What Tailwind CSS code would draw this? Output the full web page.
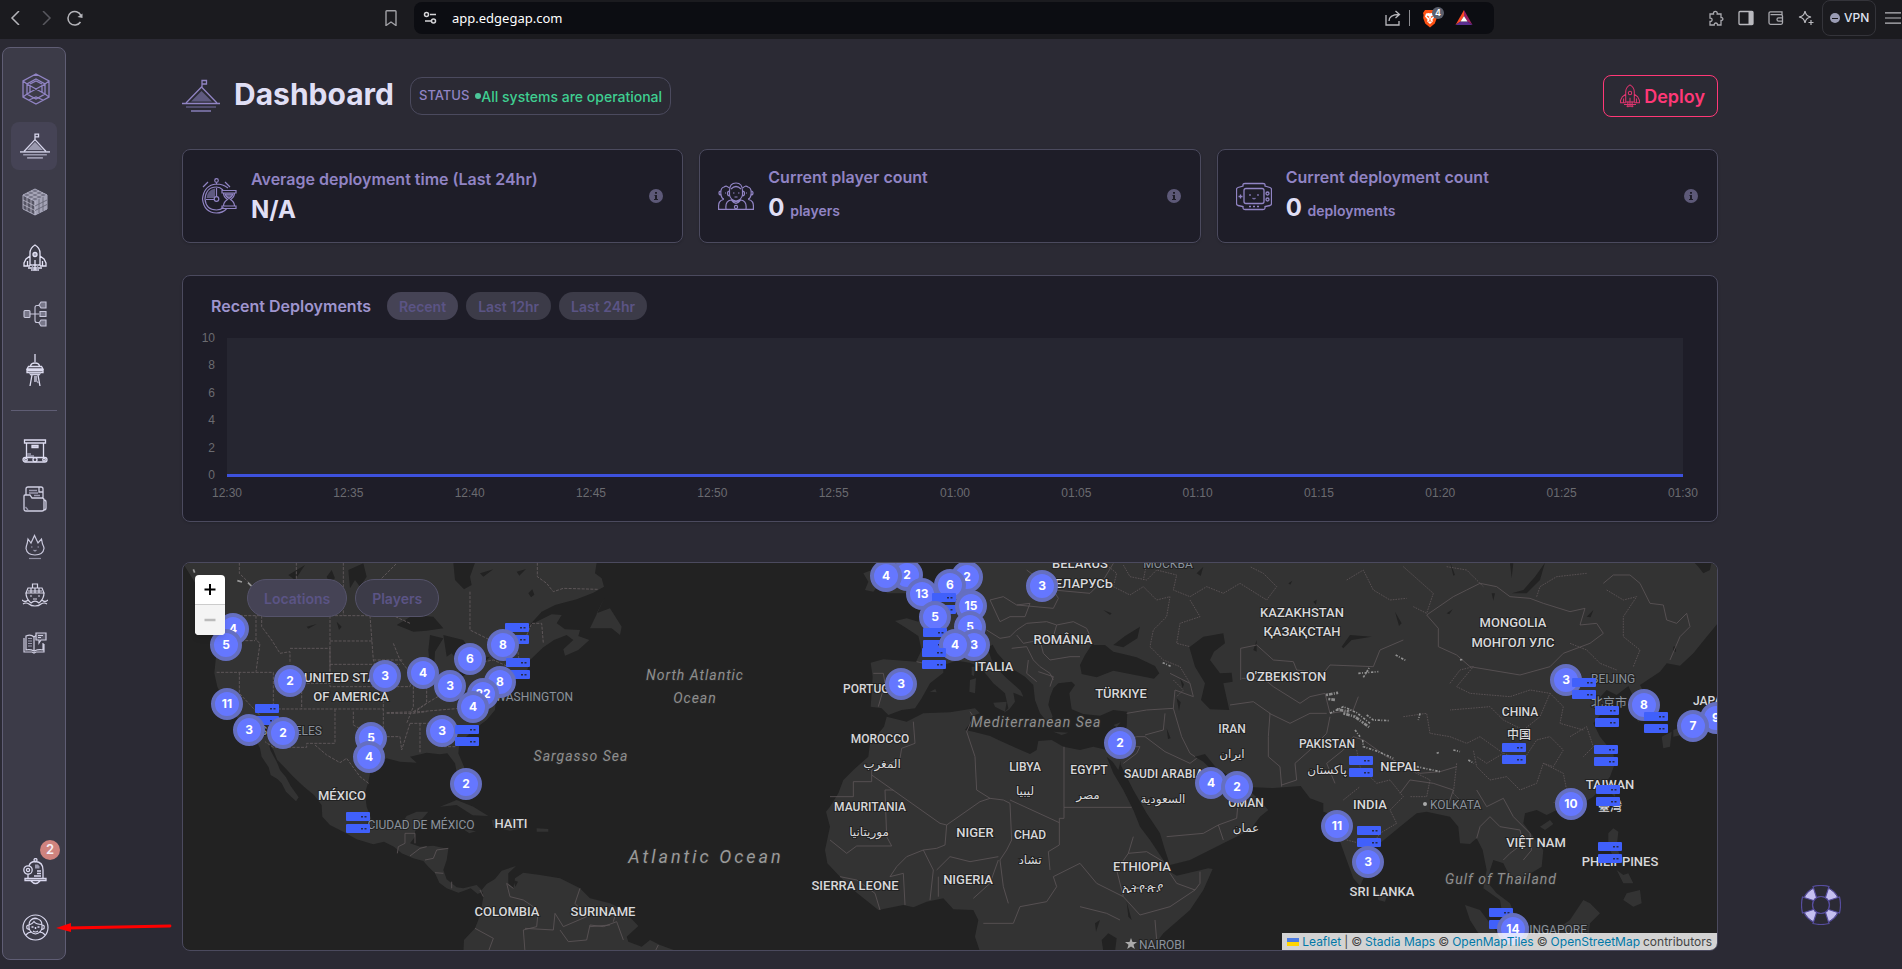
<!DOCTYPE html>
<html lang="en">
<head>
<meta charset="utf-8">
<meta name="viewport" content="width=device-width, initial-scale=1">
<title>Dashboard</title>
<script src="https://cdn.jsdelivr.net/npm/@tailwindcss/browser@4"></script>
</head>
<body class="bg-[#2b2a34] font-['Inter',sans-serif] text-[#e0dff5]">
<div class="flex min-h-screen flex-col">

<!-- Browser toolbar -->
<header class="flex h-[39px] shrink-0 bg-[#1b1b1f] pt-[2px] text-[#a9a9ae]">
  <div class="flex h-8 w-[414px] shrink-0 items-center pl-[9px] pr-[14px]">
    <button aria-label="Back" class="mr-4"><svg class="size-[14px]" viewBox="0 0 14 14" fill="none" stroke="#b5b5ba" stroke-width="1.5"><path d="M10 0 3 7l7 7"/></svg></button>
    <button aria-label="Forward" class="mr-[14px]"><svg class="size-[14px]" viewBox="0 0 14 14" fill="none" stroke="#58585e" stroke-width="1.5"><path d="m4 0 7 7-7 7"/></svg></button>
    <button aria-label="Reload"><svg class="size-4" viewBox="0 0 16 16" fill="none" stroke="#b5b5ba" stroke-width="1.5"><path d="M14 5.500A6.800 6.800 0 1 0 13.500 12"/><path d="m10.500 7 5-3.500V8z" fill="#b5b5ba" stroke="none"/></svg></button>
    <button aria-label="Bookmark" class="ml-auto"><svg class="h-4 w-[18px]" viewBox="0 0 18 16" fill="none" stroke="#a0a0a5" stroke-width="1.400"><path d="M4 1.500q0-.8.8-.8h8.400q.8 0 .8.8v14L9 12l-5 3.500z"/></svg></button>
  </div>
  <div class="flex h-8 flex-1 items-center rounded-lg bg-[#0c0d12] pl-2 pr-4">
    <svg class="size-4 shrink-0" viewBox="0 0 16 16" fill="none" stroke="#d5d5d8" stroke-width="1.500"><circle cx="4.500" cy="4.500" r="2"/><path d="M8 4.500h6"/><circle cx="11.500" cy="11" r="2"/><path d="M3 11h6"/></svg>
    <input aria-label="Address" value="app.edgegap.com" class="ml-[14px] min-w-0 flex-1 bg-transparent font-['Noto_Sans',sans-serif] text-[13px] leading-5 text-white outline-none">
    <button aria-label="Share"><svg class="size-4" viewBox="0 0 16 16" fill="none" stroke="#b9b9be" stroke-width="1.300"><path d="M1 5v10h13v-4M4 11c0-4 3-6.500 10-6.500M10.500 1 14.500 4.500l-4 3.500"/></svg></button>
    <span class="ml-2 h-4 w-px bg-[#8b8b90]"></span>
    <button aria-label="Brave Shields" class="relative ml-3"><svg class="h-[19px] w-4" viewBox="0 0 16 19"><path d="M3 1h10l2 3-.6 2 .4 3-2 5.500L8 18.500l-4.800-4L1.200 9l.4-3L1 4z" fill="#ff5214"/><path d="M4 4.500 7 4l1 .5L9 4l3 .5 1 3-2.500 3 .3 2L8 15l-2.800-2.500.3-2L3 7.500z" fill="#fff"/><path d="m5 7 2 .8-.5 1zm6 0-2 .8.5 1zM8 9v3M6.500 12.500 8 11.800l1.500.7" stroke="#ff5214" stroke-width=".8" fill="none"/></svg>
      <span class="absolute -right-[6px] -top-[2px] flex h-3 w-3 items-center justify-center rounded-full bg-[#5c606d] text-[9px] font-semibold leading-3 text-white">4</span></button>
    <button aria-label="Rewards" class="ml-[17px] mr-[5px]"><svg class="size-[18px]" viewBox="0 0 18 18"><path d="M9 1 0.500 16 5.500 12.500 9 7z" fill="#ff4a24"/><path d="m9 1 8.500 15-5-3.500L9 7z" fill="#9b1f63"/><path d="M.5 16h17l-5-3.500h-7z" fill="#5c2f91"/><path d="m9 7 3.500 5.500h-7z" fill="#fff"/></svg></button>
  </div>
  <div class="flex h-8 w-[408px] shrink-0 items-center justify-end">
    <button aria-label="Extensions" class="mr-[14px]"><svg class="size-4" viewBox="0 0 16 16" fill="none" stroke="#a9a9ae" stroke-width="1.300"><path d="M2 4h3.500c-.8-3.500 4.500-3.500 3.700 0H13v3.500c2.500-.3 2.500 3.300 0 3V15H9.500c.3-2.700-3.600-2.700-3.300 0H2v-3.500c2.800.3 2.800-3.700 0-3.400z"/></svg></button>
    <button aria-label="Sidebar" class="mr-[14px]"><svg class="size-4" viewBox="0 0 16 16"><rect x="1" y="1.500" width="14" height="13" rx="1" fill="none" stroke="#b9b9be" stroke-width="1.300"/><path d="M10.500 1.500H15v13h-4.500z" fill="#b9b9be"/></svg></button>
    <button aria-label="Wallet" class="mr-[14px]"><svg class="size-4" viewBox="0 0 16 16" fill="none" stroke="#a9a9ae" stroke-width="1.300"><path d="M14 4.500V1.800H2.500Q1 1.800 1 3.200v9.600q0 1.500 1.500 1.500H13q1.500 0 1.500-1.500V6q0-1.300-1.500-1.300H2.500M14.500 7.800h-4q-1.500 0-1.500 1.700t1.500 1.700h4"/></svg></button>
    <button aria-label="Leo AI" class="mr-2"><svg class="size-4" viewBox="0 0 16 16" fill="none" stroke="#b9b9be" stroke-width="1.200"><path d="M7 1c.8 4 2 5.200 6 6-4 .8-5.200 2-6 6-.8-4-2-5.200-6-6 4-.8 5.200-2 6-6z"/><path d="M13 10v5M10.500 12.500h5"/></svg></button>
    <button class="flex h-9 w-[54px] items-center gap-1 rounded-lg border border-[#34343a] pl-[7px] text-[12px] font-medium text-[#dfe1f0]"><span class="flex size-[10px] items-center justify-center rounded-full bg-[#9a9cb4]"><span class="h-px w-[6px] bg-[#1b1b1f]"></span></span>VPN</button>
    <button aria-label="Menu" class="ml-2"><svg class="h-3 w-[18px]" viewBox="0 0 18 12" stroke="#b9b9be" stroke-width="1.200"><path d="M1 .8h16M1 6h16M1 11.200h16"/></svg></button>
  </div>
</header>

<div class="flex flex-1">
<!-- Side navigation -->
<nav aria-label="Main" class="mb-[9px] ml-[2px] mt-2 flex w-16 shrink-0 flex-col rounded-lg border border-[#5f5d74] bg-[#3c3b48] px-2 pb-2 pt-4 text-[#d9d8ee]">
  <a href="#" aria-label="Edgegap" class="flex h-[50px] items-center justify-center pl-1"><svg class="h-8 w-7" viewBox="0 0 28 32" fill="none" stroke="#9184c4" stroke-width="1.300"><path d="M14 1 27 8v16l-13 7L1 24V8zM14 6l9 5v10l-9 5-9-5V11zM5 11l18 10M23 11 5 21M1 8l4 3M27 8l-4 3M1 24l4-3M27 24l-4-3M14 1v2M7 27l7-3 7 3M8 11l6-3 6 3M8 13v6M20 13v6"/></svg></a>
  <div class="mt-2 flex flex-col gap-2">
    <a href="#" aria-label="Dashboard" aria-current="page" class="flex h-12 items-center justify-center rounded-lg bg-[#454355] pl-[2px]"><svg class="h-[28px] w-[30px]" viewBox="0 0 38 34" fill="none" stroke="#d9d8ee"><path d="M19 9v-7h4.500v3.500H19M5 24 19 9l14 15" stroke-width="1.600"/><path d="M0 24.500h38" stroke-width="1.700"/><path d="M9 22 19 12l10 10z" fill="#9a99ae" stroke="none"/><path d="M4 28h30M9 32h20" stroke="#9a99ae" stroke-width="2"/></svg></a>
    <a href="#" aria-label="Applications" class="flex h-12 items-center justify-center pl-[2px]"><svg class="size-7" viewBox="0 0 28 28" stroke="#aaa9bd" stroke-width="1"><path d="M14 2 26 7v14l-12 6z" fill="#8f8ea2"/><path d="M14 13 2 7v14l12 6z" fill="#555463"/><path d="m14 1 12 6-12 6L2 7z" fill="#777688"/><path d="M14 13 26 7v14l-12 6z" fill="#a3a2b5" stroke="none"/><path d="M6 9v14m4-12v14m4-12v14M2 12l12 6M2 16.500l12 6M6 5l12 6M10 3l12 6M22 5l-12 6M18 3 6 9" fill="none" stroke="#c5c4d6" stroke-width=".7"/><path d="M18 11v14M22 9v14M14 18l12-6M14 22.500l12-6" fill="none" stroke="#605f70" stroke-width=".8"/></svg></a>
    <a href="#" aria-label="Deployments" class="flex h-12 items-center justify-center pl-[2px]"><svg class="h-7 w-6" viewBox="0 0 24 28" fill="none" stroke="#e3e2f5" stroke-width="1.300"><path d="M7 21V9q0-5 5-8 5 3 5 8v12zM7 12l-4 3-2 4v3h6M17 12l4 3 2 4v3h-6M4.500 17v5M19.500 17v5M12 16v10M5 24h14M8 26h8"/><circle cx="12" cy="10.500" r="2" fill="#9a99ae"/><path d="M9.500 20v7M14.500 20v7" stroke="#a3a2b5"/></svg></a>
    <a href="#" aria-label="Matchmaker" class="flex h-12 items-center justify-center pl-[2px]"><svg class="h-[26px] w-6" viewBox="0 0 24 26" fill="none" stroke="#c9c8dc" stroke-width="1.100"><rect x="1" y="9.500" width="6" height="7" rx="1" fill="#777688"/><path d="M7 13h9M16 4.500h-2q-2 0-2 2v13q0 2 2 2h2"/><path d="M18 1h5v6h-5l-2-3zM17 10.500h6v5h-6zM18 19h5v6h-5l-2-3z" fill="#777688"/></svg></a>
    <a href="#" aria-label="Beacons" class="flex h-12 items-center justify-center pl-[2px]"><svg class="h-8 w-[18px]" viewBox="0 0 18 32" fill="none" stroke="#dddcf0" stroke-width="1.300"><path d="M9 0v8M4.500 12Q5 9 9 9t4.500 3M2.500 12.500h13L17 15H1zM1 16.500h16v2H1zM4 20.500h10M6 21 4 32M12 21l2 11M9 22v6"/><path d="M10.500 22v5l2 2M3 19.500h12" stroke="#a3a2b5"/></svg></a>
  </div>
  <hr class="my-4 border-[#5f5d74]">
  <div class="flex flex-col">
    <a href="#" aria-label="Container registry" class="flex h-12 items-center justify-center pl-[2px]"><svg class="h-6 w-[26px]" viewBox="0 0 26 24" fill="none" stroke="#dddcf0" stroke-width="1.300"><path d="M2.500 1h21v3h-21zM4.500 4v14M21.500 4v14"/><path d="M10 6.500h6v2h-6z" fill="#aaa9bd"/><path d="M5 14h4v2h3v2H5z" fill="#858497" stroke="none"/><rect x="1" y="18.500" width="24" height="4.500" rx="2.250"/><circle cx="4" cy="20.700" r="1.300"/><circle cx="13" cy="20.700" r="2"/><circle cx="22" cy="20.700" r="1.300"/></svg></a>
    <a href="#" aria-label="Files" class="flex h-12 items-center justify-center pl-[2px]"><svg class="h-[26px] w-6" viewBox="0 0 24 26" fill="none" stroke="#d0cfe2" stroke-width="1.300"><path d="M3 9V3q0-2 2-2h13q2 0 2 2v9M1 10q0-1 1-1h5l2 3h10q2 0 2 2v9q0 2-2 2H3q-2 0-2-2zM21 14q2 0 2 2v6q0 2-2 2M16 1v5h4"/><path d="M6 4.500h8M6 7h9M11 9.500h6M2.500 21l2.500 3" stroke="#9a99ae"/></svg></a>
    <a href="#" aria-label="Fleet" class="flex h-12 items-center justify-center pl-[2px]"><svg class="h-[26px] w-5" viewBox="0 0 20 26" fill="none" stroke="#c9c8dc" stroke-width="1.200"><path d="M3 5l3 4 3.500-7.500L13 9l3.500-4 1 5q1.500 3 1.500 4.500-1 6.500-9 6.500T1 14.500q0-2 1.200-5z"/><path d="M6 13h1.500M12.500 13H14M8.500 16l1.500 1 1.500-1" stroke="#9a99ae"/><path d="M4 24.500h12" stroke="#8f8ea2"/></svg></a>
    <a href="#" aria-label="Clusters" class="flex h-12 items-center justify-center pl-[2px]"><svg class="h-6 w-[26px]" viewBox="0 0 26 24" fill="none" stroke="#d5d4e6" stroke-width="1.200"><path d="M10.500 1h5v4h-5zM6 5h14l2 5H4zM4 10h18q0 5-4 9M4 10q0 5 4 9M9 5v5m4-5v5m4-5v5M6 8h14M0 17q3 3 6 0l3 3q4-4 8 0l3-3q3 3 6 0M1 21q3-2 6 0 2 2 6 2t6-2q3-2 6 0"/><path d="M8 13h2M16 13h2M11 16h4"/></svg></a>
    <a href="#" aria-label="Documentation" class="flex h-12 items-center justify-center pl-[2px]"><svg class="h-[22px] w-6" viewBox="0 0 24 22" fill="none" stroke="#cfcee1" stroke-width="1.200"><path d="M3 4Q8 2 11 5v14q-4-2-8-1zM11 5l2-1.500M11 19q5-2 9-1v-7M1 6v14h8l2 1 2-1h8V12"/><path d="M5 6.500h4M5 9h4M5 11.500h4M5 14h4" stroke="#9a99ae"/><path d="M13 1h10v7h-5l-2 3V8h-3z" fill="#555463"/><path d="M15 3.500h5M15 5.500h3"/></svg></a>
  </div>
  <div class="mt-auto flex flex-col gap-2">
    <a href="#" aria-label="2 notifications" class="relative flex h-12 items-center justify-center pl-[2px]"><svg class="h-[27px] w-6" viewBox="0 0 24 27" fill="none" stroke="#d9d8ee" stroke-width="1.300"><circle cx="12.500" cy="2" r="1.500"/><path d="M6 8Q7 3.500 12.500 3.500 20 4 20 12v8M5 16v4M2 20.500h21v2H2zM8 23q4.500 5 9 0"/><circle cx="5" cy="12" r="4.200"/><circle cx="5" cy="12" r="1.600"/><path d="M12 6.500h3l1.500 2v2H12z" fill="#9a99ae" stroke="none"/><path d="M14 13h4M14 15.500h4M11 18h7"/></svg><span class="absolute -right-[3px] -top-[7px] flex size-5 items-center justify-center rounded-full bg-[#cf837e] text-[13px] font-semibold text-[#f4eef5]">2</span></a>
    <a href="#" aria-label="Account" class="flex h-12 items-center justify-center pl-[2px]"><svg class="size-[27px]" viewBox="0 0 27 27" fill="none" stroke="#d9d8ee" stroke-width="1.200"><circle cx="13.500" cy="13.500" r="12.500"/><path d="M7 11q0-6 6.500-6.500Q20 5 20 11v3q-1 5-6.500 6Q8 19 7 14zM7 11q3-.5 5-3.500 2 3 8 3M9 6q3-3 7-1M7 11q-3 0-2 3.500l2 1M20 11q3 0 2 3.500l-2 1M4 21q2-3 6-3M23 21q-2-3-6-3M11 17q2.500 2 5 0"/><path d="M9.500 13h2M15.500 13h2M13.500 13v2" stroke-width="1.500"/></svg></a>
  </div>
</nav>

<main class="min-w-0 flex-1 pb-4 pl-[116px] pr-[184px] pt-9">
  <div class="flex h-[42px] items-center">
    <svg class="h-[34px] w-[38px]" viewBox="0 0 38 34" fill="none" stroke="#9184c4"><path d="M20 8V1.500h4.500V5H20M4 24 19.500 8 35 24" stroke-width="1.300"/><path d="M0 24.500h38" stroke-width="1.400"/><path d="M9 22.500 19.500 12 30 22.500z" fill="#5f5a80" stroke="none"/><path d="M4 28h30" stroke="#5f5a80" stroke-width="1.500"/><path d="M9 32h20" stroke="#6f6896" stroke-width="2"/></svg>
    <h1 class="ml-[14px] pb-1 text-[30px] font-bold leading-10 text-[#e0dff5]">Dashboard</h1>
    <a href="#" class="ml-4 flex h-[38px] items-center rounded-xl border border-[#4b4a5e] px-2 text-[14px] font-medium text-[#3fcf91]"><span class="mr-[6px] text-[13px] text-[#9184c4]">STATUS</span><span class="size-[6px] rounded-full bg-[#4cc79a]"></span>All systems are operational</a>
    <button class="ml-auto flex h-[42px] items-center gap-[3px] rounded-lg border border-[#ff3877] pl-[15px] pr-3 text-[18px] font-semibold text-[#ff3877]"><svg class="h-6 w-[22px]" viewBox="0 0 24 28" fill="none" stroke="#e0356f" stroke-width="1.200"><path d="M7 21V9q0-5 5-8 5 3 5 8v12zM7 12l-4 3-2 4v3h6M17 12l4 3 2 4v3h-6M4.500 17v5M19.500 17v5M12 16v10M5 24h14M8 26h8M9.500 20v7M14.500 20v7"/><circle cx="12" cy="10.500" r="2"/></svg>Deploy</button>
  </div>

  <section class="mt-8 grid grid-cols-3 gap-4">
    <div class="flex h-[94px] items-center rounded-lg border border-[#4b4a5e] bg-[#1e1d28] pl-[18px] pr-[19px] shadow">
      <svg class="size-9" viewBox="0 0 36 36" fill="none" stroke="#9184c4" stroke-width="1.200"><circle cx="15.500" cy="2.500" r="1.800"/><path d="M15.500 4.500v2M2 9l5-5M24 4l5 5M27 10Q22 6 15.500 6 3 7 1.500 21 3 34.500 15.500 35q6 0 10-4"/><path d="M22 12Q19 9 15.500 9 5 9 4 21q1 11 11.500 11 4 0 7-2.500"/><path d="M14 10.500V20H5.500Q6 12 14 10.500z" fill="#5f5a80" stroke="none"/><path d="M15.500 10v9M5 21.500h8"/><circle cx="15.500" cy="21" r="2.300"/><path d="M21 12.500h14v2.500H21zM21 28h14v2.500H21zM22.500 15q0 4 4 6.500-4 2.500-4 6.500M33.500 15q0 4-4 6.500 4 2.500 4 6.500"/><path d="M24 16h8q-1 3-4 4.500-3-1.500-4-4.500z" fill="#5f5a80"/></svg>
      <div class="ml-[14px] flex-1"><h2 class="text-[16px] font-semibold leading-6 text-[#9184c4]">Average deployment time (Last 24hr)</h2><p class="pt-[3px] text-[24px] font-bold leading-8">N/A</p></div>
      <button aria-label="About deployment time" class="size-[14px] rounded-full bg-[#5d5978]"><svg viewBox="0 0 14 14"><path d="M6 3h2v1.700H6zM5.500 6H8v4h1v1H5v-1h1V7h-.5z" fill="#1e1d28"/></svg></button>
    </div>
    <div class="flex h-[94px] items-center rounded-lg border border-[#4b4a5e] bg-[#1e1d28] pl-[18px] pr-[19px] shadow">
      <svg class="size-9" viewBox="0 0 36 36" fill="none" stroke="#9184c4" stroke-width="1.200"><path d="M11.500 13q0-8 6.500-8t6.500 8v4q-1 5-6.500 6-5.500-1-6.500-6zM13 11q5-5 10 0M11.500 13q-2 0-2 2.500t2 2M24.500 13q2 0 2 2.500t-2 2M11 10Q9 7 6 9q-4 1-3 8 1 4 3 4M25 10q2-3 5-1 4 1 3 8-1 4-3 4M3 13q-2 0-2 2t2 2M33 13q2 0 2 2t-2 2M8 31q-1-8 5-9 5 4 10 0 6 1 5 9M.7 31q-1-9 5-9.500M35.300 31q1-9-5-9.500M0 31.300h36M14 23q4 5 8 0"/><circle cx="18" cy="29" r="1.600"/><path d="M15 15h1.500M20 15h1.500M7 15h1M28 15h1M16.500 19h3"/></svg>
      <div class="ml-[14px] flex-1"><h2 class="text-[16px] font-semibold leading-6 text-[#9184c4]">Current player count</h2><p class="pt-[3px] text-[24px] font-bold leading-8">0 <span class="text-[14px] font-semibold text-[#9184c4]">players</span></p></div>
      <button aria-label="About player count" class="size-[14px] rounded-full bg-[#5d5978]"><svg viewBox="0 0 14 14"><path d="M6 3h2v1.700H6zM5.500 6H8v4h1v1H5v-1h1V7h-.5z" fill="#1e1d28"/></svg></button>
    </div>
    <div class="flex h-[94px] items-center rounded-lg border border-[#4b4a5e] bg-[#1e1d28] pl-[18px] pr-[19px] shadow">
      <svg class="size-9" viewBox="0 0 36 36" fill="none" stroke="#9184c4" stroke-width="1.300"><path d="M7 8V6.500Q7 5.500 9 5.500h18q2 0 2 1V8l5 1.500q1.500.5 1.500 2v14q0 1.500-1.500 2L29 28.500V30q0 1.500-2 1.500H9q-2 0-2-1.500v-1.500L2 27.500q-1.500-.5-1.500-2v-14q0-1.500 1.500-2z"/><rect x="8" y="10.500" width="20" height="15" rx="2"/><path d="M2.500 18.500h4M4.500 16.500v4M13 28.500h2M17 28.500h2M21 28.500h2"/><circle cx="31.500" cy="15.500" r="1.500"/><circle cx="31.500" cy="21.500" r="1.500"/><path d="M13 17h2M21 17h2M16.500 20q1.500 1.500 3 0" stroke="#756ba3"/></svg>
      <div class="ml-[14px] flex-1"><h2 class="text-[16px] font-semibold leading-6 text-[#9184c4]">Current deployment count</h2><p class="pt-[3px] text-[24px] font-bold leading-8">0 <span class="text-[14px] font-semibold text-[#9184c4]">deployments</span></p></div>
      <button aria-label="About deployment count" class="size-[14px] rounded-full bg-[#5d5978]"><svg viewBox="0 0 14 14"><path d="M6 3h2v1.700H6zM5.500 6H8v4h1v1H5v-1h1V7h-.5z" fill="#1e1d28"/></svg></button>
    </div>
  </section>

  <section class="mt-8 rounded-lg border border-[#4b4a5e] bg-[#1e1d28] pb-5 pt-4 shadow">
    <div class="flex items-center gap-2 pl-7">
      <h2 class="mr-2 text-[16px] font-semibold text-[#9f95cf]">Recent Deployments</h2>
      <button class="h-7 rounded-full bg-[#454355] px-3 text-[14px] font-semibold text-[#5b5485]">Recent</button>
      <button class="h-7 rounded-full bg-[#3c3b48] px-3 text-[14px] font-semibold text-[#5b5485]">Last 12hr</button>
      <button class="h-7 rounded-full bg-[#3c3b48] px-3 text-[14px] font-semibold text-[#5b5485]">Last 24hr</button>
    </div>
    <div class="mt-[18px] flex pr-[34px] font-['Liberation_Sans',sans-serif] text-[12px] leading-4 text-[#6b6b70]">
      <div class="-my-2 flex w-8 flex-col justify-between pb-[2px] text-right"><span>10</span><span>8</span><span>6</span><span>4</span><span>2</span><span>0</span></div>
      <div class="ml-3 h-[139px] flex-1 border-b-3 border-[#3d51dd] bg-[#262631]"></div>
    </div>
    <div class="ml-11 mr-[34px] mt-2 flex justify-between font-['Liberation_Sans',sans-serif] text-[12px] leading-4 text-[#6b6b70]">
      <span class="flex w-0 justify-center">12:30</span><span class="flex w-0 justify-center">12:35</span><span class="flex w-0 justify-center">12:40</span><span class="flex w-0 justify-center">12:45</span><span class="flex w-0 justify-center">12:50</span><span class="flex w-0 justify-center">12:55</span><span class="flex w-0 justify-center">01:00</span><span class="flex w-0 justify-center">01:05</span><span class="flex w-0 justify-center">01:10</span><span class="flex w-0 justify-center">01:15</span><span class="flex w-0 justify-center">01:20</span><span class="flex w-0 justify-center">01:25</span><span class="flex w-0 justify-center">01:30</span>
    </div>
  </section>

  <!-- World map -->
  <section aria-label="Deployment map" class="relative mt-10 h-[389px] overflow-hidden rounded-lg border border-[#4b4a5e] bg-[#222222]">
    <svg class="absolute left-0 top-0 h-[387px] w-[1534px] max-w-none" viewBox="183 563 1534 387">
      <!-- Americas -->
      <g transform="translate(180 560) scale(.33333)" fill="#333">
        <path d="M8 8 40 60 70 110 100 170 105 215 113 260 107 300 103 340 112 380 128 410 150 450 180 482 205 530 232 548 240 565 245 590 266 622 272 645 292 657 305 670 318 695 348 724 356 712 332 678 318 652 300 630 290 605 272 572 266 550 280 570 292 600 312 620 340 650 372 680 402 705 425 735 427 770 450 795 490 815 530 838 580 853 612 845 642 860 665 880 700 895 730 903 745 920 765 940 778 968 800 985 835 998 850 993 872 985 893 1002 908 995 910 1010 905 1040 895 1080 885 1105 852 1140 850 1180 850 1300H1600L1495 1175 1440 1155 1410 1140 1385 1160 1345 1145 1340 1130 1375 1098 1330 1050 1290 1030 1230 1015 1200 985 1140 955 1080 945 1030 938 1005 955 1000 985 985 970 985 940 1008 918 965 932 945 957 920 972 905 990 890 975 850 985 830 982 800 958 790 930 800 900 805 867 760 857 720 860 690 850 705 830 705 815 715 790 745 755 710 755 680 768 665 790 640 800 600 798 575 780 560 740 555 700 565 665 570 640 600 607 620 595 660 605 710 608 690 590 740 578 780 583 802 580 825 610 832 645 850 670 858 655 852 620 835 580 838 550 880 510 920 480 945 450 948 410 975 370 1000 345 1042 330 1050 300 1090 262 1122 240 1160 225 1180 240 1150 268 1155 287 1195 270 1228 240 1195 228 1200 210 1155 208 1130 190 1145 165 1115 163 1070 185 1040 205 1085 155 1125 135 1190 118 1240 98 1272 80 1265 55 1245 40 1250 8Z"/>
        <path d="M1275 110 1250 160 1290 145 1325 200 1320 225 1295 205 1230 205ZM780 740 830 720 880 740 925 768 878 766 830 735ZM935 780 1000 775 1045 802 990 812 940 800ZM1070 805l35 2v8h-35zM848 806l40 8-20 6zM1168 780l8 6M665 1130l30 8"/>
        <g fill="#222"><path d="M820 8H885L870 50 875 75 852 88 825 60ZM650 195 700 165 760 170 790 205 740 212 700 215ZM750 225 790 235 765 275 762 330 750 330 745 270ZM790 225 850 240 870 270 830 300 815 280 800 290ZM810 350 880 318 850 348ZM870 300 930 290 915 305 870 312ZM505 30 550 10 560 50 540 80 525 60 510 85ZM560 60l15 10-15 18-8-15zM1000 960l14 5-8 15zM325 45l50-30-30 45zM440 50l15-20 10 25-18 12zM900 40l40-12-30 22zM1010 35l28-8-20 20zM1045 100l12-12 6 16-10 8zM380 200l30-8-25 14zM470 185l15 15-8 10z"/></g>
        <g fill="none" stroke="#5d5658" stroke-width="3" stroke-dasharray="9 4"><path d="M140 167H640L690 190M178 8V40L250 110 300 165M349 8V60L360 167M490 8V167M605 55 650 10M228 167V240L240 250 228 335M105 242H225M110 337H280M178 337V400L262 490M280 337V447M245 167 245 200 275 240 300 280 330 275V310M330 265H450V370H360M450 167V380H610M450 243H580M450 313H660M280 447H610M365 380V447M465 447V550H380V562H280L255 545M405 555 440 585 480 608 500 595 540 650 566 670M520 455V495L565 520 610 530M610 380V560M620 460H700L740 455M620 530H660L665 570M690 490 665 570M720 490V580M690 490H820M770 490 785 560H830M570 167 580 300 610 380M580 300H670M610 380H690L700 340M640 250 660 300 700 350M700 340V440L680 490M740 340V430L700 460M790 340V400L740 430 700 455M790 400 830 420 860 400M620 458 720 455 840 445M870 95V210L930 240 990 235 1030 250 1055 190 1085 190 1090 250M1010 250 1020 320M885 310 940 300 985 320M880 370 960 365M1072 8V50L1100 70 1120 95 1150 85 1255 88"/></g>
        <g fill="none" stroke="#5d5658" stroke-width="2.500"><path d="M652 880 655 860 675 850V820H705V850M690 888 720 865 740 860M735 900 760 895 770 870 805 865M765 938 790 940M815 965V985M910 1010 900 990M1000 985 980 970 990 1010 1030 1020 1075 1050 1070 1100 1030 1110 1035 1175M885 1105 940 1135 925 1175M1035 1105 1120 1110 1125 1060 1150 1100 1220 1070 1185 1030 1200 985M1140 1110 1165 1145 1220 1140 1230 1095 1270 1100 1310 1085 1330 1140M1300 1085 1310 1050M1230 1100 1290 1095M1425 1175 1435 1155"/></g>
        <g fill="none" stroke="#9a9a9a" stroke-width="5"><path d="M172 62l14 4M204 68l10 10M40 28l4 10"/></g>
      </g>
      <!-- Europe, Africa and Asia -->
      <g transform="translate(990 550) scale(.33333)" fill="#333">
        <path d="M-60 35-90 100-150 150-185 180-215 215-250 205-285 213-250 235-215 258-205 300-222 335-320 328-358 338-352 380-358 470-325 475-305 495-265 480-225 475-205 445-180 400-140 368-140 345-100 332-60 338-30 350 10 400 45 430 55 475 40 490 58 478 75 455 70 428 100 440 92 422 50 385 10 345-8 292 8 284 22 310 60 352 105 380 130 405 135 450 150 490 175 520 188 500 175 465 180 440 190 415 205 400 245 395 255 405 238 430 245 478 280 492 330 497 370 480 412 485 410 530 400 575 385 600 350 600 310 590 270 600 220 590 185 570 145 573 140 600 120 612 80 595 30 572 0 558-50 545-75 540-60 520-60 500-30 490-45 475-120 487-200 490-250 515-310 500-318 530-360 580-365 620-410 660-440 690-455 730-480 770-492 785-480 830-495 900-488 940-450 980-410 1020-335 1080-260 1065-230 1072-190 1055-140 1045-110 1078-50 1080-35 1110-45 1160-30 1205V1250H480L490 1190 520 1150 600 1080 640 1020 668 957 655 955 560 977 540 965 520 930 480 870 450 830 430 780 400 720 370 670 350 620 368 635 385 660 392 632 392 645 430 720 470 790 510 850 525 900 540 945 600 930 700 880 780 840 810 800 835 780 800 742 775 720 740 695 722 722 690 715 665 660 640 635 615 620 645 612 680 655 740 690 790 712 850 714 932 708 960 745 1000 760 1000 785 1045 800 1045 860 1070 930 1090 985 1110 1008 1132 960 1145 900 1200 855 1230 830 1280 790 1310 785 1380 800 1405 830 1410 880 1440 882 1460 865 1478 900 1490 960 1480 1015 1530 1050 1540 1110 1570 1150 1600 1165 1580 1110 1560 1060 1520 1030 1495 1000 1500 960 1510 930 1540 940 1555 970 1590 990 1655 950 1660 900 1630 860 1600 820 1605 790 1640 780 1670 795 1700 780 1760 770 1810 740 1860 680 1875 640 1870 610 1830 560 1810 520 1835 490 1880 478 1850 462 1830 442 1850 420 1880 435 1915 408 1930 440 1920 475 1945 515 1970 500 1968 440 1950 405 2010 365 2030 340 2070 347 2110 310 2150 260 2190 212V35Z"/>
        <path d="M-380 70-340 55-330 100-350 125-375 120-365 95ZM-320 40-260 35-245 130-310 130ZM-60 390-42 385-45 430-62 425ZM-55 350-45 350-48 378-55 375ZM10 458 50 455 45 485 15 470ZM-180 425l16-8 4 10zM190 545l45 3-20 7zM370 525l22-8-12 14zM1160 1025 1190 1040 1185 1055 1165 1050ZM1650 830l30-20 10 12-25 18zM1855 850 1870 835 1885 845 1880 890 1895 930 1870 920 1855 890ZM1880 960 1900 975 1915 970 1930 1000 1900 1000ZM1910 1030 1950 1020 1955 1060 1930 1070 1900 1050ZM1865 700 1880 690 1875 740 1862 730ZM1425 1065 1470 1080 1530 1160 1560 1205H1500L1440 1110ZM1690 1145 1740 1110 1780 1050 1800 1060 1830 1090 1800 1120 1790 1205H1700ZM2015 560 2045 545 2040 590 2020 595ZM2050 540 2100 520 2190 470V530L2120 545 2050 560ZM2140 500l50-30v-30l-50 45z"/>
        <g fill="#222"><path d="M285 315 305 285 345 285 370 305 400 312 440 322 495 348 508 370 492 386 420 372 370 362 320 382 275 372 270 345ZM370 285 405 258 450 230 442 265 400 292ZM598 292 640 260 700 250 705 280 672 305 660 330 690 370 725 368 728 395 700 400 718 480 660 478 633 450 645 400 615 350ZM1565 130 1600 120 1635 80 1665 38 1650 90 1610 130ZM1560 40h10l-5 45zM1505 130h10l-5 22zM335 1170 355 1150 380 1165 375 1205H340ZM2110 35 2165 35 2160 60 2140 70 2125 50ZM410 1055 425 1110 415 1100ZM315 1120 330 1110 318 1145ZM1055 290 1080 255 1145 260 1085 270 1060 295ZM790 300 800 270 800 305ZM340 180l25 10-5 5zM530 535l12 30-8 2zM560 445l12 12-5 25zM1380 35l15 40-5 2zM570 385l12 18-4 12zM1215 185l20 35-8 8zM620 70l20-20-8 28zM895 100l12-8-6 12zM1370 190l18-12-10 15zM1790 200l20-20-8 22zM2050 290l8-2v18l-8-4zM970 155l10-6-2 16z"/></g>
        <g fill="none" stroke="#5d5658" stroke-width="2.500"><path d="M-350 370H-320L-315 400-335 470M-220 335-135 355M-100 160-60 190-45 260-15 275M0 150 40 140 80 165 120 160 105 200 60 200 30 215 0 150M-10 240 30 265 60 260 80 240 110 220 170 215 200 225 190 260 150 270 100 280 80 255M80 165 190 175 205 145 190 120 110 60M200 225 250 215 290 235 305 270M150 270 160 310 180 330 240 320 270 320M65 295 110 290 130 330 150 350 180 370 190 390M115 330 110 370 140 395M145 365 190 380 180 410M190 120 300 130 340 90 370 40M410 490 470 480 550 475 555 420 610 440 600 400 540 370M550 475 575 560 600 610 615 620M465 555 520 540 525 490M400 575 440 560 465 560 525 605 600 640 620 625M410 590 450 590 440 610 400 640M222 590V772H425M222 772V805H208V885L175 905 180 960M60 750 208 818M0 745 40 750 60 760 65 870 50 900 30 930 40 1010 55 1060M-230 515-225 580-265 595-270 625-320 650-355 660-355 695H-410V740H-480M-355 675-150 820-130 825-30 755 0 745-40 720-45 620-70 545-50 500-60 485M-290 720-315 720-310 860-295 888H-400L-430 910-480 870M-130 825-135 885-160 895-200 900-250 920-280 950-300 980M-450 980-400 990-345 1030-330 1080M-300 980-260 970-255 1065M-200 900-170 960-180 1050M-160 960-120 920-60 935 25 920M-155 1040-155 980M-50 1045 0 1000 25 930M-20 1120 70 1120 90 1070 170 1055 200 1010 190 980 270 940 320 1000 400 1040M430 860 415 910 470 905 520 935M415 910 380 960 400 1040 450 1095 540 1070 615 1020 630 1000 630 965M540 970 560 1000 615 1020M495 1110 500 1170M270 1070 350 1090 390 1110M530 860 640 850 685 825 740 805 745 750M685 825 700 870M720 465 790 455 840 490 835 560 835 620 870 650 875 710M752 390V295L800 285 850 330 910 335 920 360 1000 370 1020 345 1150 350 1170 300 1240 270M755 385 820 385 850 410 930 460 960 440 1005 430 1020 490 1090 480 1105 440M838 490 900 520 960 490 1010 490M875 705 920 690 915 640 960 600 1010 550 1020 500M1035 700 1010 640 1060 600 1090 560 1120 570M1120 570 1190 620 1290 670 1350 665 1400 650M1310 195 1345 235 1345 290 1400 315 1440 350 1530 365 1590 375 1680 350 1720 310 1800 280 1840 250 1820 220 1770 225 1785 175 1740 185 1660 160 1620 145 1560 140 1520 110 1470 100 1430 120 1390 140 1310 195M1840 100 1870 75 1920 75 1950 100 1980 160 2020 165 2030 210 2060 220 2090 190 2100 230 2070 260 2040 330M1460 865 1470 830 1500 800 1530 830 1590 840 1600 880 1560 910 1540 930M1460 720 1490 770 1540 745 1570 800 1620 850 1625 900 1600 930M1230 730 1260 690 1330 700 1390 720 1370 780"/></g>
        <g fill="none" stroke="#5f5759" stroke-width="2.500" stroke-dasharray="5 3"><path d="M350 45 380 70 370 110 420 135 460 110 500 150 540 140 530 200 490 240 480 290 520 330 570 350 600 400M400 45 420 80 470 90 500 60 560 75 550 120 600 140 650 110 700 130 750 100 830 150 860 110 820 70 780 50M470 40 460 90M600 150 630 200 570 220 560 280 600 290M1070 90 1120 60 1150 120 1200 150 1250 145M1240 50 1330 130 1310 190 1270 170M1370 50 1430 60 1480 110M1640 140 1650 110 1700 80 1790 70M1380 400 1410 360 1450 350 1400 410 1440 430 1560 440 1620 420 1680 430 1650 500 1600 540 1540 510 1500 470 1380 480M1240 500 1310 490 1320 550 1380 560 1430 580 1470 560 1540 610 1490 640 1460 620M1540 610 1600 630 1640 570 1680 560 1720 600 1690 650 1660 640 1640 700 1590 720 1550 680 1500 690 1460 650 1450 600M1660 640 1720 670 1730 720 1690 760M1740 560 1790 530 1810 590 1780 620M1680 430 1720 470 1710 520 1780 540M1740 280 1790 300 1830 340 1880 360M1850 120 1900 150 1940 140 1900 200 1900 260 1950 300 1930 350M1100 600 1110 650 1160 700 1200 690 1240 740 1200 780 1220 820 1170 850 1150 880M1060 750 1110 710M1070 870 1110 880M1240 650 1320 690 1310 740 1260 740M1400 640 1390 730 1420 760M550 390 580 420 560 440"/></g>
        <g fill="none" stroke="#8c8c8c" stroke-width="8" stroke-dasharray="6 3 11 4 3 4"><path d="M1008 435 1045 428M1015 447 1038 450M1040 478 1080 485M1060 490 1095 500 1138 532"/></g>
        <g fill="none" stroke="#929292" stroke-width="5" stroke-dasharray="7 4 3 5"><path d="M1020 490 1060 470 1100 488 1140 520M1130 495 1150 510 1200 512M1095 540 1110 560M1118 570 1120 590 1165 605 1210 625M1105 370 1165 365M1120 382 1140 350M518 338 545 350M1217 315 1250 333M1280 650 1350 665M1390 600 1410 605M1435 630 1452 640M1340 610 1350 606M1290 490 1285 510M1410 330 1420 328"/></g>
      </g>
      <path d="m1131 938 1.500 4h4.500l-3.500 2.800 1.300 4.200-3.800-2.600-3.800 2.600 1.300-4.200-3.500-2.800h4.500z" fill="#aaa"/>
      <circle cx="1425" cy="804" r="2" fill="#aaa"/>
      <g id="labels"></g>
    </svg>
    <div id="markers" class="absolute left-0 top-0"></div>

    <div class="absolute left-3 top-3 flex w-[30px] flex-col overflow-hidden rounded-sm bg-white shadow-md">
      <button aria-label="Zoom in" class="flex h-[30px] items-center justify-center border-b border-[#ccc]"><svg class="size-3" viewBox="0 0 12 12" stroke="#000" stroke-width="2"><path d="M6 0v11M.5 5.500h11"/></svg></button>
      <button aria-label="Zoom out" disabled class="flex h-[30px] items-center justify-center bg-[#f4f4f4]"><svg class="size-3" viewBox="0 0 12 12" stroke="#bbb" stroke-width="2.500"><path d="M.5 6h11"/></svg></button>
    </div>
    <div class="absolute left-16 top-4 flex gap-2">
      <button class="h-[38px] rounded-full border border-[#55536a] bg-[#454355] px-4 text-[14px] font-semibold text-[#5b5485]">Locations</button>
      <button class="h-[38px] rounded-full border border-[#55536a] bg-[#3c3b48] px-4 text-[14px] font-semibold text-[#5b5485]">Players</button>
    </div>
    <div class="absolute bottom-0 right-0 flex h-[17px] items-center gap-[3px] bg-white/80 px-[5px] text-[12px] leading-4 text-[#444]">
      <a href="#" class="flex items-center gap-[3px] text-[#0078a8]"><svg class="h-2 w-3" viewBox="0 0 12 8"><path d="M0 0h12v4H0z" fill="#4c7be1"/><path d="M0 4h12v4H0z" fill="#ffd500"/></svg>Leaflet</a><span>|</span><span>©</span><a href="#" class="text-[#0078a8]">Stadia Maps</a><span>©</span><a href="#" class="text-[#0078a8]">OpenMapTiles</a><span>©</span><a href="#" class="text-[#0078a8]">OpenStreetMap</a><span>contributors</span>
    </div>
  </section>
</main>
</div>
</div>

<!-- Pointer to the account entry -->
<svg class="fixed bottom-9 left-14 h-3 w-[116px]" viewBox="0 0 116 12"><path d="M0 7 15 2v9z" fill="#f00"/><path d="M12 7 114 5" stroke="#f00" stroke-width="2.800" stroke-linecap="round"/></svg>

<button aria-label="Help" class="fixed bottom-11 right-[61px]"><svg class="size-10" viewBox="0 0 40 40" fill="none" stroke="#574d9e" stroke-width="1.200"><circle cx="20" cy="20" r="13.500" stroke="#c5bff0" stroke-width="9"/><circle cx="20" cy="20" r="18.500"/><circle cx="20" cy="20" r="8.500"/><path d="M12 1.500Q20-.5 28 1.500L24.500 12.500Q20 10.500 15.500 12.500zM12 38.500Q20 40.500 28 38.500L24.500 27.500Q20 29.500 15.500 27.500zM1.500 12Q-.5 20 1.500 28L12.500 24.500Q10.500 20 12.500 15.500zM38.500 12Q40.500 20 38.500 28L27.500 24.500Q29.500 20 27.500 15.500z" fill="#2b2a34"/></svg></button>

<script>
const styles = {
  n: "fill-[#d8d8da] stroke-[#222] stroke-2 text-[12px] font-medium [paint-order:stroke]",
  w: "fill-[#d8d8da] stroke-[#222] stroke-2 text-[13px] font-medium [paint-order:stroke]",
  c: "fill-[#8b929c] stroke-[#222] stroke-2 text-[12px] [paint-order:stroke]",
  s: "fill-[#8f8f8f] stroke-[#292929] stroke-2 text-[14px] italic tracking-[1px] [paint-order:stroke]",
  o: "fill-[#9a9a9a] stroke-[#292929] stroke-2 text-[18px] italic tracking-[3px] [paint-order:stroke]"
};
// [text, x, baseline, style, anchor]
const labels = [
  ["UNITED STATES",304,682,"w","start"],["OF AMERICA",351,701,"w"],["WASHINGTON",573,701,"c","end"],["LOS ANGELES",322,735,"c","end"],
  ["MÉXICO",342,800,"w"],["CIUDAD DE MÉXICO",421,829,"c"],["HAITI",511,828,"w"],["COLOMBIA",507,916,"w"],["SURINAME",603,916,"w"],
  ["Sargasso Sea",581,761,"s"],["North Atlantic",695,680,"s"],["Ocean",695,703,"s"],["Atlantic Ocean",706,863,"o"],
  ["PORTUGAL",843,693,"n","start"],["MOROCCO",880,743,"n"],["المغرب",882,768,"n"],["MAURITANIA",870,811,"n"],["موريتانيا",869,836,"n"],
  ["NIGER",975,837,"w"],["NIGERIA",968,884,"w"],["SIERRA LEONE",855,890,"w"],["ITALIA",994,671,"w"],["ROMÂNIA",1063,644,"w"],["TÜRKIYE",1121,698,"w"],
  ["Mediterranean Sea",1036,727,"s"],["BELARUS",1080,568,"w"],["МОСКВА",1168,568,"c"],["БЕЛАРУСЬ",1113,588,"w","end"],
  ["KAZAKHSTAN",1302,617,"w"],["ҚАЗАҚСТАН",1302,636,"w"],["O'ZBEKISTON",1286,681,"w"],["IRAN",1232,733,"n"],["ایران",1232,758,"n"],
  ["PAKISTAN",1327,748,"n"],["پاکستان",1327,774,"n"],["LIBYA",1025,771,"n"],["ليبيا",1025,795,"n"],["EGYPT",1089,774,"n"],["مصر",1088,799,"n"],
  ["SAUDI ARABIA",1124,778,"n","start"],["السعودية",1163,803,"n"],["OMAN",1246,807,"n"],["عمان",1246,832,"n"],["CHAD",1030,839,"n"],["تشاد",1030,864,"n"],
  ["ETHIOPIA",1142,871,"w"],["ኢትዮጵያ",1142,892,"n"],["NAIROBI",1162,949,"c"],["NEPAL",1400,771,"w"],["INDIA",1370,809,"w"],["SRI LANKA",1382,896,"w"],
  ["MONGOLIA",1513,627,"w"],["МОНГОЛ УЛС",1513,647,"w"],["BEIJING",1591,683,"c","start"],["北京市",1591,707,"c","start"],["CHINA",1520,716,"n"],["中国",1519,739,"n"],
  ["KOLKATA",1430,809,"c","start"],["JAPAN",1693,705,"n","start"],["TAIWAN",1610,789,"w"],["臺灣",1610,811,"n"],["VIỆT NAM",1536,847,"w"],
  ["PHILIPPINES",1620,866,"w"],["Gulf of Thailand",1501,884,"s"],["SINGAPORE",1587,934,"c","end"]
];
const layer = document.getElementById("labels");
layer.setAttribute("class", "font-['Roboto','Noto_Sans_CJK_SC','Noto_Sans','DejaVu_Sans',sans-serif]");
for (const [text, x, y, kind, anchor] of labels) {
  const t = document.createElementNS("http://www.w3.org/2000/svg", "text");
  t.setAttribute("x", x); t.setAttribute("y", y);
  t.setAttribute("text-anchor", anchor || "middle");
  t.setAttribute("class", styles[kind]);
  t.textContent = text;
  layer.appendChild(t);
}

// Clusters carry a centre and a count; servers only a centre
const clusters = [[233,629,4],[226,645,5],[290,681,2],[385,676,3],[423,673,4],[450,686,3],[470,659,6],[503,645,8],[500,682,8],[483,694,22],[473,707,4],[227,704,11],[249,730,3],[283,733,2],[442,731,3],[371,738,5],[369,757,4],[466,784,2],
  [886,576,4],[907,575,2],[922,594,13],[950,585,6],[967,577,2],[971,606,15],[935,617,5],[970,627,5],[974,645,3],[955,645,4],[901,684,3],
  [1042,586,3],[1120,743,2],[1211,783,4],[1237,787,2],[1337,826,11],[1368,862,3],[1566,680,3],[1644,705,8],[1693,726,7],[1716,718,9],[1571,804,10],[1513,929,14]];
const servers = [[517,634],[518,669],[267,715],[467,736],[358,823],[944,604],[935,639],[934,659],[1361,767],[1369,837],[1584,689],[1607,717],[1656,723],[1514,754],[1606,756],[1608,796],[1610,853],[1501,919]];
const pins = [...clusters, ...servers].sort((a, b) => a[1] - b[1]);
const markers = document.getElementById("markers");
for (const [x, y, count] of pins) {
  const el = document.createElement("div");
  if (count) {
    el.className = "absolute flex size-8 items-center justify-center rounded-full border-4 border-[#656fc0] bg-[#6577ff] text-[12px] font-bold text-white";
    el.textContent = count;
    el.style.left = (x - 183 - 16) + "px";
    el.style.top = (y - 563 - 16) + "px";
  } else {
    el.className = "absolute h-[21px] w-6";
    el.innerHTML = '<svg class="h-[21px] w-6" viewBox="0 0 24 21"><path d="M1 0h22q1 0 1 1v7q0 1-1 1H1q-1 0-1-1V1q0-1 1-1zM1 12h22q1 0 1 1v7q0 1-1 1H1q-1 0-1-1v-7q0-1 1-1z" fill="#4060fb"/><path d="M15 4h2v1.500h-2zM18.500 4h2v1.500h-2zM15 16h2v1.500h-2zM18.500 16h2v1.500h-2z" fill="#252b4d"/></svg>';
    el.style.left = (x - 183 - 12) + "px";
    el.style.top = (y - 563 - 11) + "px";
  }
  markers.appendChild(el);
}
</script>
</body>
</html>
